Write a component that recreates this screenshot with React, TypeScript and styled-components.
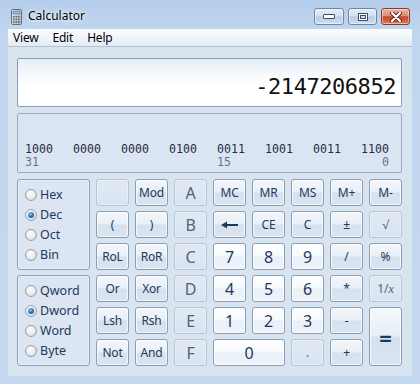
import React from 'react';
import styled, { createGlobalStyle, css } from 'styled-components';

const GlobalStyle = createGlobalStyle`
  html, body {
    margin: 0;
    padding: 0;
    background: #ffffff;
  }
  body {
    font-family: 'Noto Sans', 'Open Sans', sans-serif;
  }
`;

const Window = styled.div`
  width: 420px;
  height: 384px;
  box-sizing: border-box;
  display: flex;
  flex-direction: column;
  padding: 0 8px 8px 8px;
  background: linear-gradient(180deg, #b4cdea 0%, #c0d6ee 30px, #c5d9f0 100%);
  overflow: hidden;
`;

const TitleBar = styled.div`
  height: 29px;
  display: flex;
  align-items: flex-start;
  flex-shrink: 0;
`;

const AppIcon = styled.svg`
  margin: 9px 0 0 3px;
  width: 11px;
  height: 16px;
`;

const Title = styled.div`
  margin: 8px 0 0 6px;
  font-size: 12px;
  line-height: 16px;
  color: #000;
  text-shadow: 0 0 6px rgba(255, 255, 255, 0.95), 0 0 3px rgba(255, 255, 255, 0.9);
`;

const Captions = styled.div`
  margin: 8px 2px 0 auto;
  display: flex;
  gap: 4px;
`;

const CaptionButton = styled.div<{ $close?: boolean; $w: number }>`
  box-sizing: border-box;
  width: ${(p) => p.$w}px;
  height: 17px;
  border-radius: 3px;
  display: flex;
  align-items: center;
  justify-content: center;
  border: 1px solid ${(p) => (p.$close ? '#8a3a2a' : '#6f86a6')};
  box-shadow: inset 0 0 0 1px rgba(255, 255, 255, 0.45);
  background: ${(p) =>
    p.$close
      ? 'linear-gradient(180deg, #e9b2a4 0%, #dc8c77 45%, #c8472d 52%, #d3603f 80%, #e0876a 100%)'
      : 'linear-gradient(180deg, #e4eef9 0%, #d2e0f0 45%, #b9cde5 52%, #c3d6ec 80%, #d3e2f3 100%)'};
`;

const MenuBar = styled.div`
  height: 17px;
  flex-shrink: 0;
  display: flex;
  gap: 14px;
  padding-left: 5px;
  border-bottom: 1px solid #b4bfcf;
  background: linear-gradient(180deg, #fbfcfe 0%, #eef3f9 60%, #e3eaf4 100%);
`;

const MenuItem = styled.span`
  font-size: 12px;
  line-height: 17px;
  color: #000;
  letter-spacing: -0.2px;
`;

const Client = styled.div`
  flex: 1;
  display: flex;
  flex-direction: column;
  gap: 6px;
  padding: 11px 10px 10px 9px;
  background: #d9e4f1;
`;

const Display = styled.div`
  box-sizing: border-box;
  height: 49px;
  border: 1px solid #8e9db3;
  border-radius: 2px;
  padding: 15px 5px 0 0;
  text-align: right;
  background: linear-gradient(180deg, #e6edf7 0%, #f7f9fd 35%, #ffffff 60%);
  font-family: 'DejaVu Sans Mono', 'Liberation Mono', monospace;
  font-size: 22px;
  line-height: 26px;
  letter-spacing: -0.45px;
  color: #111;
`;

const BitPanel = styled.div`
  box-sizing: border-box;
  height: 60px;
  border: 1px solid #9aaabf;
  border-radius: 2px;
  background: #dbe5f1;
  padding: 0 12px 3px 7px;
  display: flex;
  flex-direction: column;
  justify-content: flex-end;
  font-family: 'DejaVu Sans Mono', 'Liberation Mono', monospace;
  font-size: 11.6px;
  line-height: 13px;
`;

const BitRow = styled.div`
  display: flex;
  justify-content: space-between;
`;

const BitCell = styled.span<{ $label?: boolean; $right?: boolean }>`
  width: 28px;
  text-align: ${(p) => (p.$right ? 'right' : 'left')};
  color: ${(p) => (p.$label ? '#6a7484' : '#1f2f47')};
  white-space: pre;
`;

const Keypad = styled.div`
  display: grid;
  grid-template-columns: 73px repeat(8, 33px);
  grid-auto-rows: 27px;
  column-gap: 6px;
  row-gap: 5px;
`;

const RadioGroup = styled.div<{ $row: number }>`
  grid-column: 1;
  grid-row: ${(p) => p.$row} / span 3;
  box-sizing: border-box;
  border: 1px solid #8fa0b8;
  border-radius: 3px;
  background: #dce6f2;
  box-shadow: inset 0 0 0 1px rgba(255, 255, 255, 0.35);
  display: flex;
  flex-direction: column;
  justify-content: center;
  padding-left: 7px;
`;

const RadioRow = styled.div`
  height: 20px;
  display: flex;
  align-items: center;
  gap: 3px;
  font-size: 12.5px;
  color: #1e395b;
`;

const RadioDot = styled.span<{ $on?: boolean }>`
  box-sizing: border-box;
  width: 12px;
  height: 12px;
  border-radius: 50%;
  border: 1px solid #9a9fa6;
  background: radial-gradient(circle at 40% 35%, #ffffff 0%, #e7e9ec 55%, #c9cdd2 100%);
  display: flex;
  align-items: center;
  justify-content: center;
  ${(p) =>
    p.$on &&
    css`
      &::after {
        content: '';
        width: 6px;
        height: 6px;
        border-radius: 50%;
        background: radial-gradient(circle at 40% 35%, #8fd0ff 0%, #2a7cc4 45%, #0b3c6e 100%);
      }
    `}
`;

type Variant = 'num' | 'op' | 'off';

const variantStyles = {
  num: css`
    border: 1px solid #8b9db5;
    color: #1e395b;
    background: linear-gradient(180deg, #fdfeff 0%, #f6f9fc 48%, #eaf0f7 52%, #f0f4f9 100%);
    box-shadow: inset 0 0 0 1px rgba(255, 255, 255, 0.8);
  `,
  op: css`
    border: 1px solid #8b9db5;
    color: #1e395b;
    background: linear-gradient(180deg, #f4f7fb 0%, #e9eff7 48%, #d6e1ee 52%, #dbe5f1 100%);
    box-shadow: inset 0 0 0 1px rgba(255, 255, 255, 0.7);
  `,
  off: css`
    border: 1px solid #b6c5d8;
    color: #51627a;
    background: linear-gradient(180deg, #e1e9f4 0%, #dae4f0 100%);
    box-shadow: inset 0 0 0 1px rgba(255, 255, 255, 0.3);
  `,
};

const Key = styled.div<{ $variant: Variant; $size: number; $span?: number; $rows?: number; $bold?: boolean }>`
  box-sizing: border-box;
  grid-column: span ${(p) => p.$span ?? 1};
  grid-row: span ${(p) => p.$rows ?? 1};
  border-radius: 3px;
  display: flex;
  align-items: center;
  justify-content: center;
  font-size: ${(p) => p.$size}px;
  font-weight: ${(p) => (p.$bold ? 700 : 400)};
  letter-spacing: -0.2px;
  ${(p) => variantStyles[p.$variant]}
`;

const SerifX = styled.i`
  font-family: 'Liberation Serif', serif;
  font-size: 13px;
`;

type KeyDef = {
  label: React.ReactNode;
  variant: Variant;
  size?: number;
  span?: number;
  rows?: number;
  bold?: boolean;
};

const BackArrow = () => (
  <svg width="17" height="8" viewBox="0 0 17 8">
    <path d="M0 4 L6 0.5 L6 7.5 Z" fill="#1e395b" />
    <rect x="5" y="3" width="12" height="2" fill="#1e395b" />
  </svg>
);

const row1: KeyDef[] = [
  { label: '', variant: 'off' },
  { label: 'Mod', variant: 'op' },
  { label: 'A', variant: 'off', size: 16 },
  { label: 'MC', variant: 'op' },
  { label: 'MR', variant: 'op' },
  { label: 'MS', variant: 'op' },
  { label: 'M+', variant: 'op' },
  { label: 'M-', variant: 'op' },
];

const row2: KeyDef[] = [
  { label: '(', variant: 'op' },
  { label: ')', variant: 'op' },
  { label: 'B', variant: 'off', size: 16 },
  { label: <BackArrow />, variant: 'op' },
  { label: 'CE', variant: 'op' },
  { label: 'C', variant: 'op' },
  { label: '±', variant: 'op' },
  { label: '√', variant: 'off' },
];

const row3: KeyDef[] = [
  { label: 'RoL', variant: 'op' },
  { label: 'RoR', variant: 'op' },
  { label: 'C', variant: 'off', size: 16 },
  { label: '7', variant: 'num', size: 16 },
  { label: '8', variant: 'num', size: 16 },
  { label: '9', variant: 'num', size: 16 },
  { label: '/', variant: 'op' },
  { label: '%', variant: 'op' },
];

const row4: KeyDef[] = [
  { label: 'Or', variant: 'op' },
  { label: 'Xor', variant: 'op' },
  { label: 'D', variant: 'off', size: 16 },
  { label: '4', variant: 'num', size: 16 },
  { label: '5', variant: 'num', size: 16 },
  { label: '6', variant: 'num', size: 16 },
  { label: '*', variant: 'op' },
  {
    label: (
      <>
        1/<SerifX>x</SerifX>
      </>
    ),
    variant: 'off',
  },
];

const row5: KeyDef[] = [
  { label: 'Lsh', variant: 'op' },
  { label: 'Rsh', variant: 'op' },
  { label: 'E', variant: 'off', size: 16 },
  { label: '1', variant: 'num', size: 16 },
  { label: '2', variant: 'num', size: 16 },
  { label: '3', variant: 'num', size: 16 },
  { label: '-', variant: 'op' },
  { label: '=', variant: 'op', size: 22, rows: 2, bold: true },
];

const row6: KeyDef[] = [
  { label: 'Not', variant: 'op' },
  { label: 'And', variant: 'op' },
  { label: 'F', variant: 'off', size: 16 },
  { label: '0', variant: 'num', size: 16, span: 2 },
  { label: '.', variant: 'off' },
  { label: '+', variant: 'op' },
];

const bits = ['1000', '0000', '0000', '0100', '0011', '1001', '0011', '1100'];

const renderKeys = (keys: KeyDef[], prefix: string) =>
  keys.map((k, i) => (
    <Key
      key={prefix + i}
      $variant={k.variant}
      $size={k.size ?? 12}
      $span={k.span}
      $rows={k.rows}
      $bold={k.bold}
    >
      {k.label}
    </Key>
  ));

const Radio = ({ label, on }: { label: string; on?: boolean }) => (
  <RadioRow>
    <RadioDot $on={on} />
    {label}
  </RadioRow>
);

const CalcIcon = () => (
  <AppIcon viewBox="0 0 11 16">
    <defs>
      <linearGradient id="body" x1="0" y1="0" x2="1" y2="1">
        <stop offset="0" stopColor="#f4f4f4" />
        <stop offset="1" stopColor="#a9adb3" />
      </linearGradient>
    </defs>
    <rect x="0.5" y="0.5" width="10" height="15" rx="1" fill="url(#body)" stroke="#6b7078" />
    <rect x="2" y="2" width="7" height="3" fill="#8cc3ec" stroke="#3a6f9e" strokeWidth="0.6" />
    {[0, 1, 2].map((r) =>
      [0, 1, 2].map((c) => (
        <rect key={`${r}${c}`} x={2 + c * 2.5} y={7 + r * 2.6} width="1.6" height="1.6" fill="#5d6470" />
      ))
    )}
  </AppIcon>
);

const App = () => (
  <>
    <GlobalStyle />
    <Window>
      <TitleBar>
        <CalcIcon />
        <Title>Calculator</Title>
        <Captions>
          <CaptionButton $w={30}>
            <svg width="12" height="5" viewBox="0 0 12 5">
              <rect x="0.5" y="0.5" width="11" height="4" rx="0.5" fill="#ffffff" stroke="#3d4f66" />
            </svg>
          </CaptionButton>
          <CaptionButton $w={29}>
            <svg width="10" height="8" viewBox="0 0 10 8">
              <rect x="0.5" y="0.5" width="9" height="7" fill="#ffffff" stroke="#3d4f66" />
              <rect x="2.5" y="2.5" width="5" height="3" fill="#cfdcec" stroke="#3d4f66" />
            </svg>
          </CaptionButton>
          <CaptionButton $w={29} $close>
            <svg width="12" height="10" viewBox="0 0 12 10">
              <path d="M2 1 L10 9 M10 1 L2 9" stroke="#5a1e14" strokeWidth="4" strokeLinecap="round" />
              <path d="M2 1 L10 9 M10 1 L2 9" stroke="#ffffff" strokeWidth="2.2" strokeLinecap="round" />
            </svg>
          </CaptionButton>
        </Captions>
      </TitleBar>
      <MenuBar>
        <MenuItem>View</MenuItem>
        <MenuItem>Edit</MenuItem>
        <MenuItem>Help</MenuItem>
      </MenuBar>
      <Client>
        <Display>-2147206852</Display>
        <BitPanel>
          <BitRow>
            {bits.map((b, i) => (
              <BitCell key={i}>{b}</BitCell>
            ))}
          </BitRow>
          <BitRow>
            {bits.map((_, i) => (
              <BitCell key={i} $label $right={i === 7}>
                {i === 0 ? '31' : i === 4 ? '15' : i === 7 ? '0' : ''}
              </BitCell>
            ))}
          </BitRow>
        </BitPanel>
        <Keypad>
          <RadioGroup $row={1}>
            <Radio label="Hex" />
            <Radio label="Dec" on />
            <Radio label="Oct" />
            <Radio label="Bin" />
          </RadioGroup>
          <RadioGroup $row={4}>
            <Radio label="Qword" />
            <Radio label="Dword" on />
            <Radio label="Word" />
            <Radio label="Byte" />
          </RadioGroup>
          {renderKeys(row1, 'a')}
          {renderKeys(row2, 'b')}
          {renderKeys(row3, 'c')}
          {renderKeys(row4, 'd')}
          {renderKeys(row5, 'e')}
          {renderKeys(row6, 'f')}
        </Keypad>
      </Client>
    </Window>
  </>
);

export default App;
